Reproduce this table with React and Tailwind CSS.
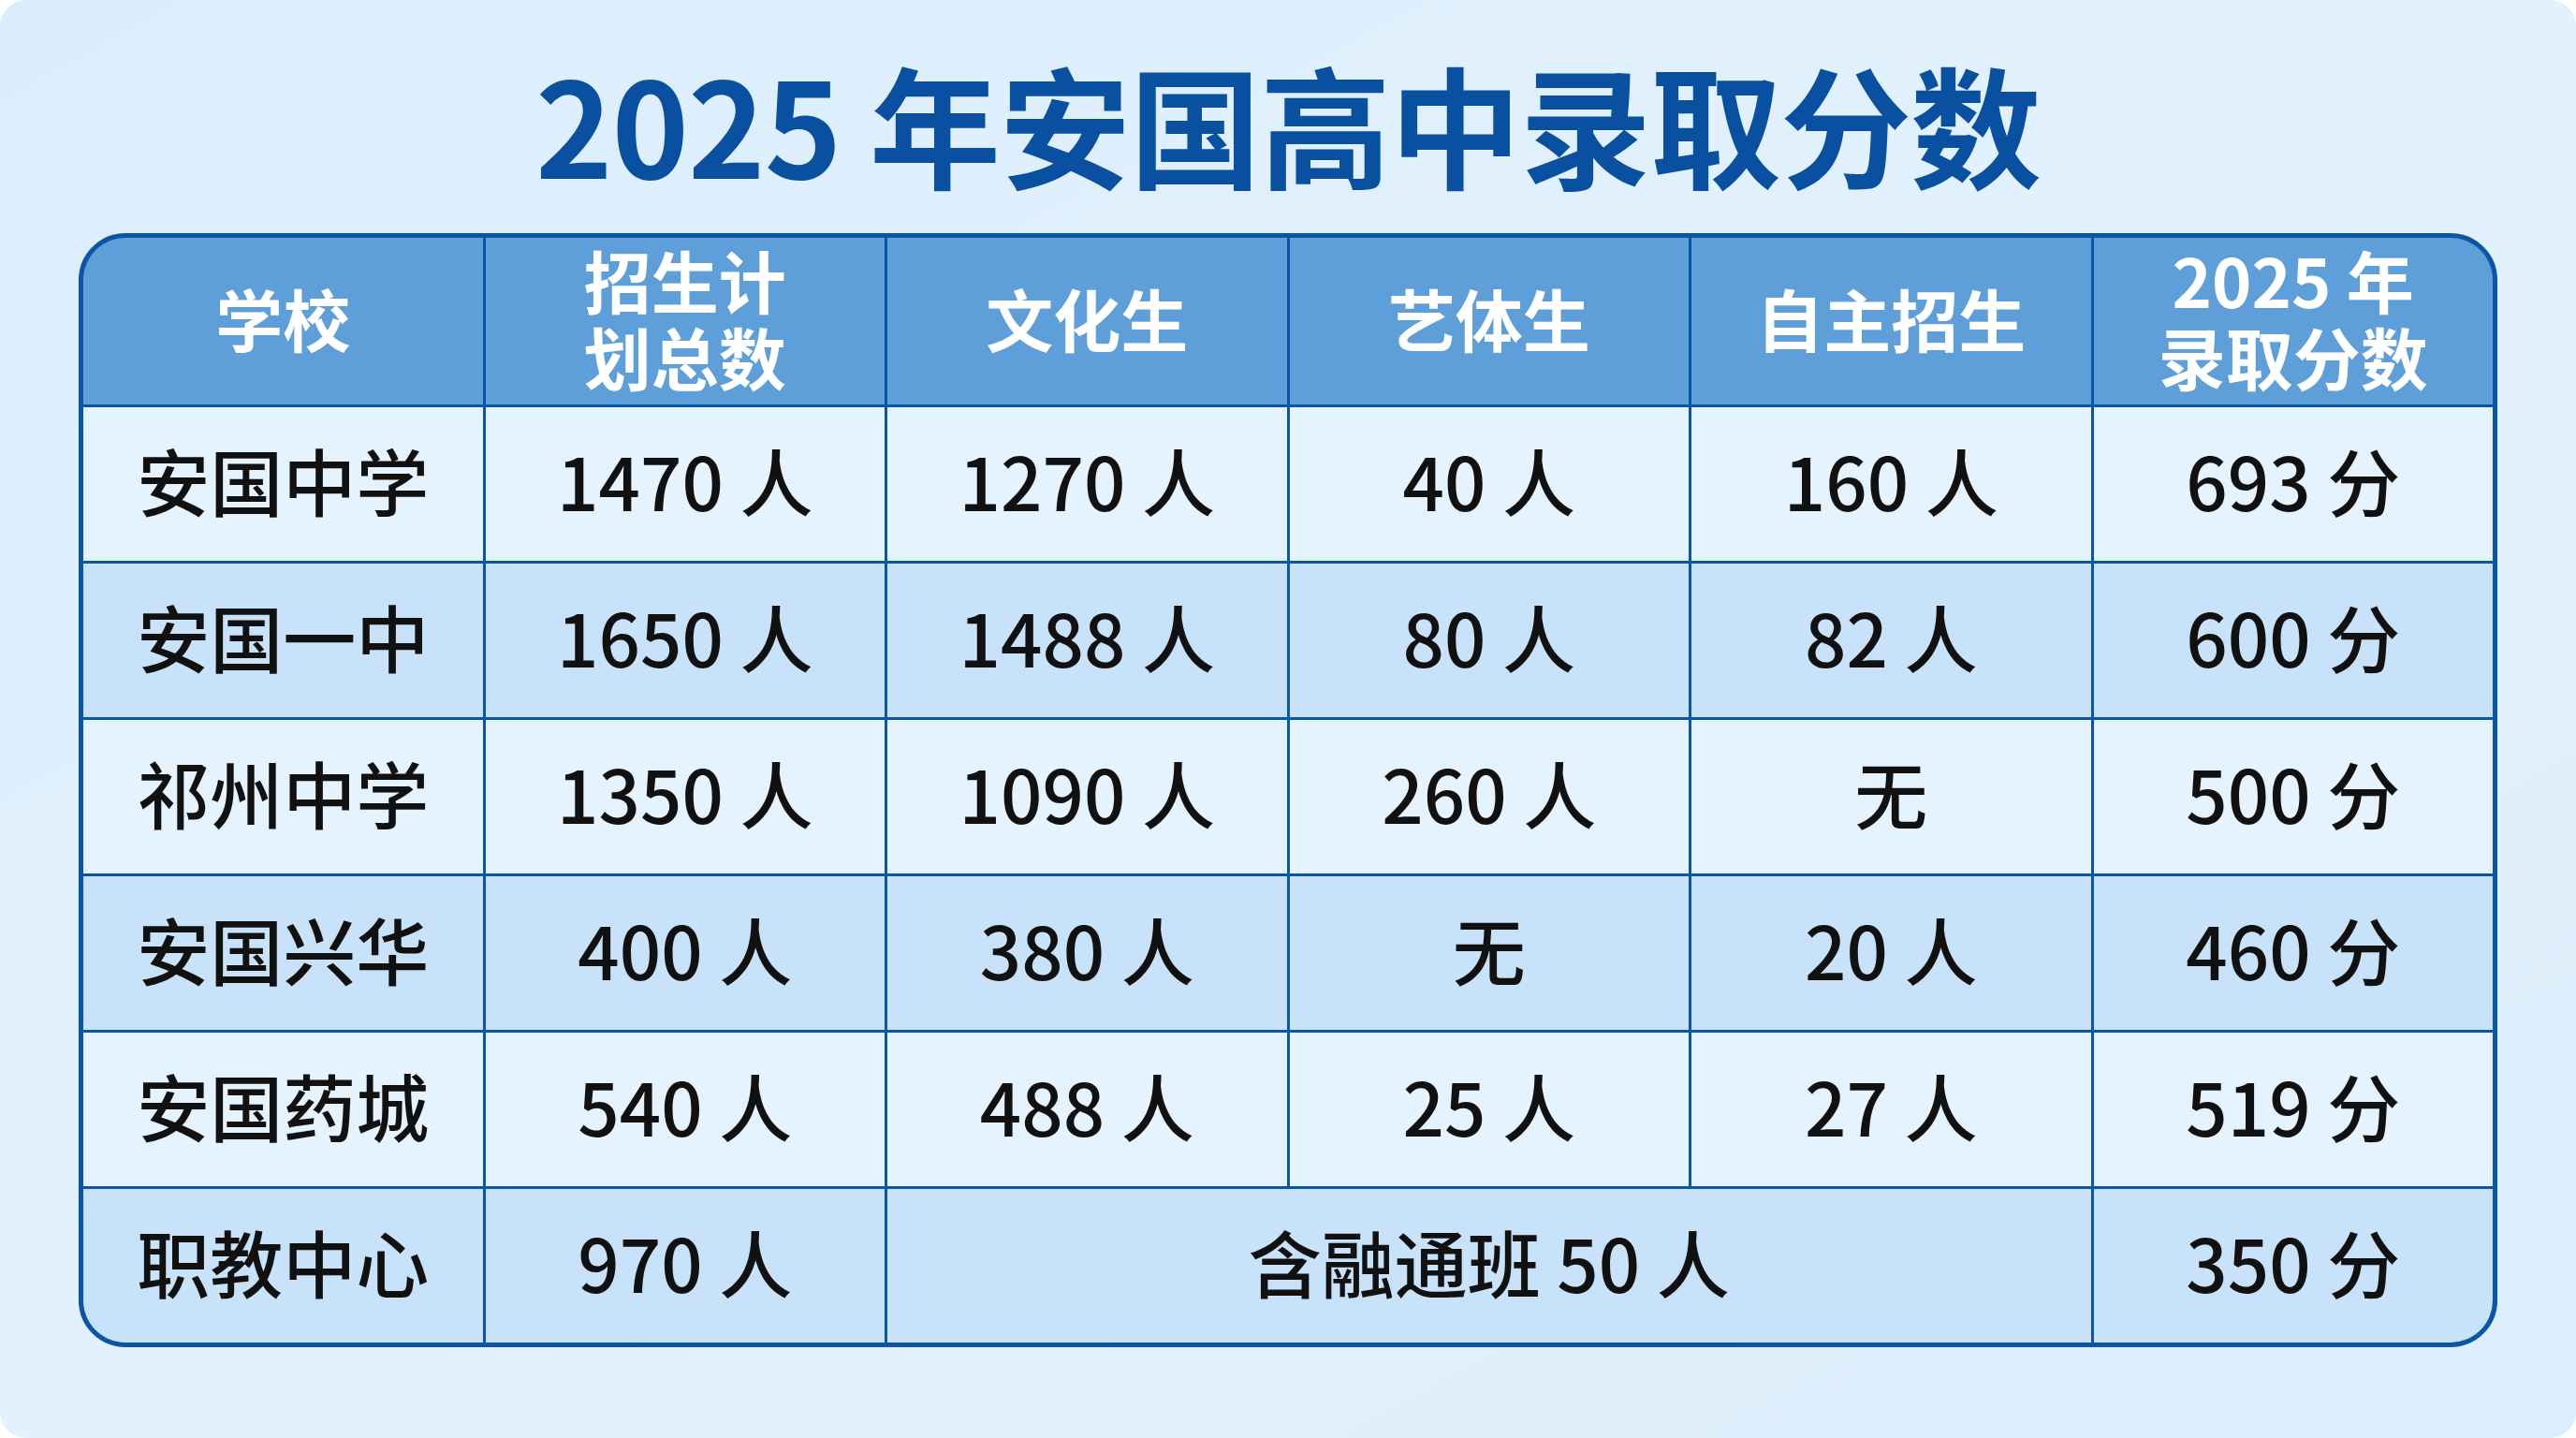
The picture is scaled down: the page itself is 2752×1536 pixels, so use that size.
import React from "react";

const FONT = { fontFamily: '"Noto Sans CJK SC", "Noto Sans", sans-serif' };

const rows = [
  ["安国中学", "1470 人", "1270 人", "40 人", "160 人", "693 分"],
  ["安国一中", "1650 人", "1488 人", "80 人", "82 人", "600 分"],
  ["祁州中学", "1350 人", "1090 人", "260 人", "无", "500 分"],
  ["安国兴华", "400 人", "380 人", "无", "20 人", "460 分"],
  ["安国药城", "540 人", "488 人", "25 人", "27 人", "519 分"],
];

function Head({ lines }) {
  return (
    <div className="bg-[#5e9ed9] flex flex-col items-center justify-center pb-[8px] text-center text-white font-bold text-[72px] leading-[82px]">
      {lines.map((l) => (
        <div key={l}>{l}</div>
      ))}
    </div>
  );
}

function Cell({ children, dark, span }) {
  return (
    <div
      className={
        (dark ? "bg-[#c7e2f9] " : "bg-[#e5f3fe] ") +
        (span ? "col-span-3 " : "") +
        "flex items-center justify-center pb-[10px] text-[78px] leading-none text-[#111111] font-medium"
      }
    >
      {children}
    </div>
  );
}

export default function App() {
  return (
    <div className="w-[2752px] h-[1536px] bg-white" style={FONT}>
      <div className="w-full h-full rounded-[28px] bg-gradient-to-br from-[#dbedfc] via-[#e2f1fd] to-[#dcedfb] flex flex-col">
        <div className="h-[249px] flex items-center justify-center pt-[10px]">
          <h1 className="text-[140px] leading-none font-bold text-[#0a50a0] tracking-[-1px]">
            2025 年安国高中录取分数
          </h1>
        </div>
        <div className="ml-[84px] w-[2584px] rounded-[50px] overflow-hidden border-[5px] border-[#0b55a6] bg-[#0b55a6] grid grid-cols-6 grid-rows-[178px_repeat(6,164px)] gap-[3px]">
          <Head lines={["学校"]} />
          <Head lines={["招生计", "划总数"]} />
          <Head lines={["文化生"]} />
          <Head lines={["艺体生"]} />
          <Head lines={["自主招生"]} />
          <Head lines={["2025 年", "录取分数"]} />
          {rows.map((r, i) =>
            r.map((c, j) => (
              <Cell key={i + "-" + j} dark={i % 2 === 1}>
                {c}
              </Cell>
            ))
          )}
          <Cell dark>职教中心</Cell>
          <Cell dark>970 人</Cell>
          <Cell dark span>
            含融通班 50 人
          </Cell>
          <Cell dark>350 分</Cell>
        </div>
      </div>
    </div>
  );
}
